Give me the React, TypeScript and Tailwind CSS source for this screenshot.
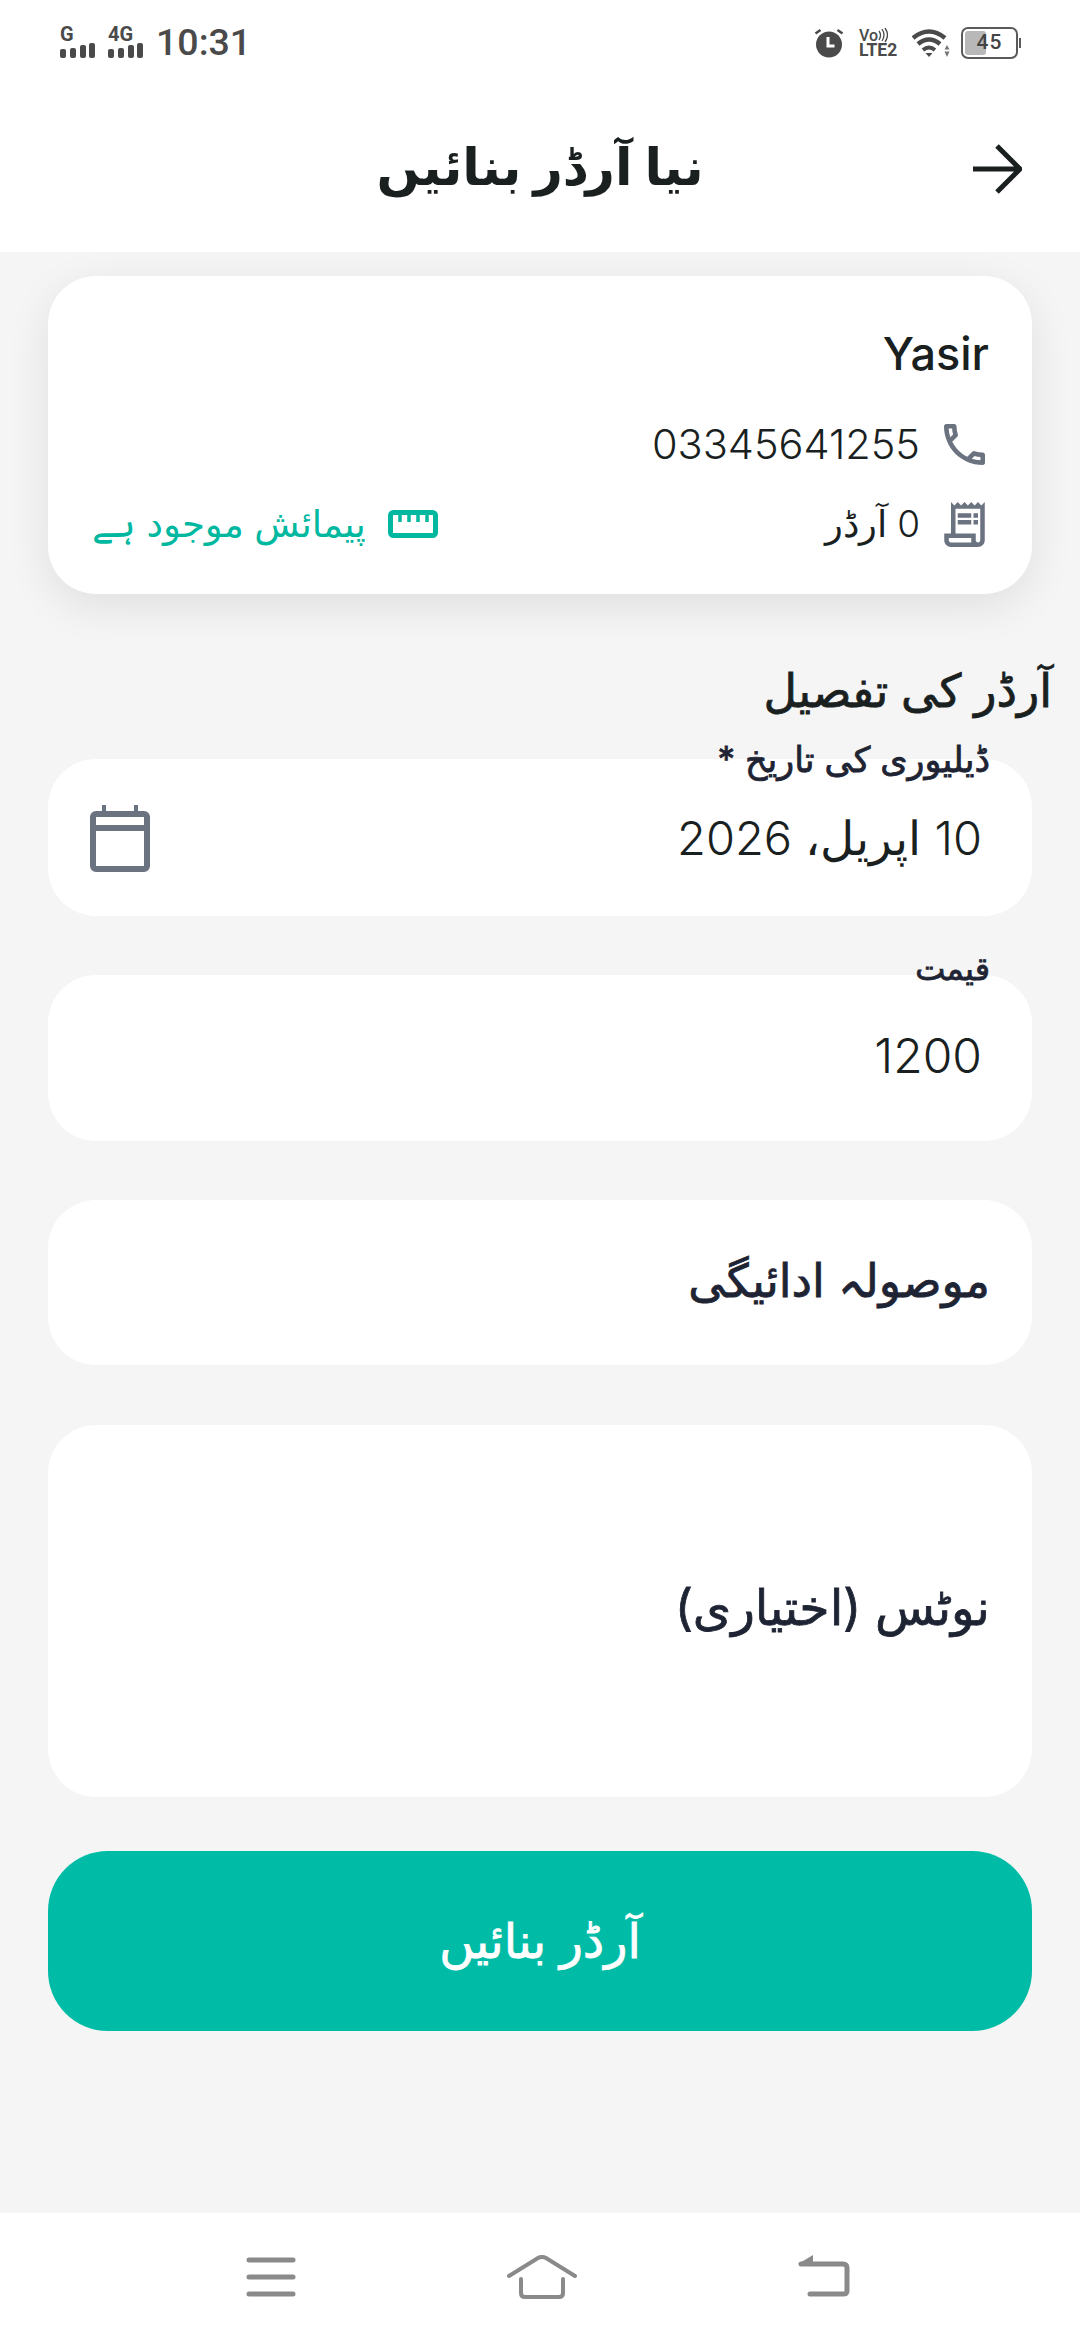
const base = "font-['Inter','DejaVu_Sans',sans-serif]";
const semi = "[-webkit-text-stroke:0.8px_currentColor]";
const roboto = "font-['Roboto',sans-serif]";

function Bars({ label }: { label: string }) {
  return (
    <div className="w-[36px] flex flex-col">
      <span className={`h-[16px] text-[20px] leading-[15px] font-bold text-[#4a4a4a] ${roboto}`}>{label}</span>
      <svg width="36" height="15" viewBox="0 0 36 15" fill="#4a4a4a">
        <rect x="0" y="6" width="6" height="9" rx="2" />
        <rect x="10" y="5" width="6" height="10" rx="2" />
        <rect x="20" y="2" width="6" height="13" rx="2" />
        <rect x="29" y="0" width="6" height="15" rx="2" />
      </svg>
    </div>
  );
}

function StatusBar() {
  return (
    <div dir="ltr" className="h-[60px] pt-[27px] pl-[60px] pr-[59px] flex items-start justify-between">
      <div className="flex items-start gap-[12px] text-[#4a4a4a]">
        <Bars label="G" />
        <Bars label="4G" />
        <span className={`text-[37.500px] leading-[31px] font-medium ${roboto}`}>10:31</span>
      </div>
      <div className="flex items-center gap-[15px]">
        <svg width="30" height="30" viewBox="0 0 30 30">
          <circle cx="15" cy="16.500" r="13" fill="#4a4a4a" />
          <path d="M14 9v9h6.500" stroke="#fff" strokeWidth="3" fill="none" />
          <path d="M1.500 5.500l5-3.500M28.500 5.500l-5-3.500" stroke="#4a4a4a" strokeWidth="2.500" />
        </svg>
        <div className="w-[38px] flex flex-col text-[#4a4a4a]">
          <div className="flex items-center h-[15px]">
            <span className={`text-[16px] leading-[15px] font-medium ${roboto}`}>Vo</span>
            <svg width="10" height="15" viewBox="0 0 10 15" fill="none" stroke="#4a4a4a" strokeWidth="1.300">
              <path d="M1 3q3 4 0 9M4 1q4 6 0 12M7 0q5 7 0 14" />
            </svg>
          </div>
          <span className={`text-[17.500px] leading-[15px] font-bold ${roboto}`}>LTE2</span>
        </div>
        <svg width="38" height="30" viewBox="0 0 38 30" fill="none" stroke="#4a4a4a">
          <path d="M1 10Q17-3 33 10" strokeWidth="4.500" />
          <path d="M6 16Q17 7 28 16" strokeWidth="4.500" />
          <path d="M11 22Q17 17 23 22" strokeWidth="4" />
          <path d="M13.500 25h7l-3.500 4z" fill="#4a4a4a" stroke="none" />
          <path d="M35 17l2.500 4.500h-5zM35 29l2.500-5.500h-5z" fill="#777" stroke="none" />
        </svg>
        <div className="flex items-center ml-[-4px]">
          <div className="relative w-[57px] h-[32px] border-2 border-[#5a5a5a] rounded-[7px] overflow-hidden p-[2px]">
            <div className="h-full w-[21px] rounded-[3px] bg-[#b8b8b8]" />
            <span className={`absolute inset-0 flex items-center justify-center text-[21px] tracking-[1px] font-medium text-[#444] ${roboto}`}>45</span>
          </div>
          <div className="w-[2px] h-[10px] bg-[#5a5a5a] ml-[1px]" />
        </div>
      </div>
    </div>
  );
}

function Field({ className, children }: { className: string; children: React.ReactNode }) {
  return <div className={`relative bg-white rounded-[48px] ${className}`}>{children}</div>;
}

export default function App() {
  return (
    <div dir="rtl" className={`w-[1080px] h-[2340px] bg-[#f5f5f5] flex flex-col overflow-hidden ${base}`}>
      <header className="bg-white h-[252px] shrink-0">
        <StatusBar />
        <div className="h-[192px] relative flex items-center justify-center pt-[20px]">
          <h1 className="text-[51px] font-bold text-[#1a1f1f] leading-none">نیا آرڈر بنائیں</h1>
          <svg className="absolute right-[58px] top-[84px]" width="50" height="50" viewBox="0 0 50 50" fill="none" stroke="#1a1f1f" strokeWidth="5">
            <path d="M1 25h46M25 2l23 23-23 23" />
          </svg>
        </div>
      </header>

      <main className="flex-1 px-[48px] pt-[24px] flex flex-col">
        <section className="h-[318px] bg-white rounded-[48px] shadow-[0_12px_44px_rgba(0,0,0,0.09)] pr-[44px] pl-[44px] pt-[46px]">
          <div dir="ltr" className="text-right text-[45px] leading-[64px] font-medium text-[#1a1f1f] mr-[-1px]">Yasir</div>
          <div className="flex items-center gap-[24px] mt-[33px] h-[50px] mr-[3px]">
            <svg width="41" height="41" viewBox="3 3 18 18" fill="#6b7280">
              <path d="M6.54 5c.06.89.21 1.76.45 2.59l-1.2 1.2c-.41-1.2-.67-2.47-.76-3.79h1.51m9.86 12.02c.85.24 1.72.39 2.6.45v1.49c-1.32-.09-2.59-.35-3.8-.75l1.2-1.19M7.5 3H4c-.55 0-1 .45-1 1 0 9.39 7.61 17 17 17 .55 0 1-.45 1-1v-3.490c0-.55-.45-1-1-1-1.240 0-2.450-.2-3.570-.57-.1-.04-.21-.05-.31-.05-.26 0-.51.1-.71.29l-2.200 2.200c-2.830-1.450-5.150-3.760-6.590-6.590l2.200-2.200c.28-.28.36-.67.25-1.020C8.700 6.450 8.500 5.250 8.500 4c0-.55-.45-1-1-1z" />
            </svg>
            <span dir="ltr" className="text-[41.500px] text-[#1a1f1f] font-light">03345641255</span>
          </div>
          <div className="flex items-center mt-[30px] h-[50px] justify-between mr-[3px]">
            <div className="flex items-center gap-[24px]">
              <svg width="41" height="45" viewBox="3 2 18 20" fill="#6b7280">
                <path d="M19.500 3.500L18 2l-1.500 1.500L15 2l-1.500 1.500L12 2l-1.500 1.500L9 2 7.500 3.500 6 2v14H3v3c0 1.660 1.340 3 3 3h12c1.660 0 3-1.340 3-3V2l-1.500 1.500zM15 20H6c-.55 0-1-.45-1-1v-1h10v2zm4-1c0 .55-.45 1-1 1s-1-.45-1-1v-3H8V5h11v14z" />
                <path d="M9 7h6v2H9zM16 7h2v2h-2zM9 10h6v2H9zM16 10h2v2h-2z" />
              </svg>
              <span className="text-[37px] text-[#1a1f1f] font-light">0 آرڈر</span>
            </div>
            <div className="flex items-center gap-[22px] text-[#00b8a0] text-[37px]">
              <svg width="50" height="28" viewBox="0 0 50 28">
                <rect x="2.500" y="2.500" width="45" height="23" rx="3" fill="none" stroke="#00b8a0" strokeWidth="5" />
                <path d="M12 3v9M21 3v9M30 3v9M39 3v9" stroke="#00b8a0" strokeWidth="3.500" />
              </svg>
              <span>پیمائش موجود ہے</span>
            </div>
          </div>
        </section>

        <h2 className={`mt-[68px] mr-[-20px] text-[46px] leading-[56px] text-[#1a1f1f] ${semi}`}>آرڈر کی تفصیل</h2>

        <Field className="h-[157px] mt-[41px] mb-[59px]">
          <label className={`absolute right-[42px] top-[-20px] text-[35px] leading-[40px] text-[#1e2433] ${semi}`}>ڈیلیوری کی تاریخ *</label>
          <div className="h-full flex items-center justify-between pr-[50px] pl-[42px] pt-[2px]">
            <span className="text-[47px] text-[#1a1f1f] font-light">10 اپریل، 2026</span>
            <svg width="60" height="67" viewBox="0 0 60 67" fill="none" stroke="#6b7280" strokeWidth="6">
              <rect x="3" y="9" width="54" height="55" rx="3" />
              <path d="M2 23h56" />
              <path d="M14 0v9M46 0v9" strokeWidth="4" />
            </svg>
          </div>
        </Field>

        <Field className="h-[166px] mb-[59px]">
          <label className={`absolute right-[42px] top-[-26px] text-[32px] leading-[40px] text-[#1e2433] ${semi}`}>قیمت</label>
          <div dir="ltr" className="h-full flex items-center justify-end pr-[50px] pb-[4px] text-[48px] text-[#1a1f1f] font-light">1200</div>
        </Field>

        <Field className="h-[165px] mb-[60px]">
          <div className={`h-full flex items-center pr-[42px] pb-[4px] text-[46px] text-[#1e2433] ${semi}`}>موصولہ ادائیگی</div>
        </Field>

        <Field className="h-[372px] mb-[54px]">
          <div className={`h-full flex items-center pr-[42px] pb-[6px] text-[49px] text-[#1e2433] ${semi}`}>نوٹس (اختیاری)</div>
        </Field>

        <button className={`h-[180px] rounded-[60px] bg-[#00bca6] text-white text-[48px] flex items-center justify-center ${semi}`}>آرڈر بنائیں</button>
      </main>

      <nav dir="ltr" className="bg-white h-[127px] shrink-0 flex items-start justify-between pl-[246px] pr-[230px] pt-[42px]">
        <svg width="50" height="40" viewBox="0 0 50 40" stroke="#8a8a8a" strokeWidth="5" strokeLinecap="round" className="mt-[2px]">
          <path d="M3 3h44M3 20h44M3 37h44" />
        </svg>
        <svg width="70" height="44" viewBox="0 0 70 44" fill="none" stroke="#8a8a8a" strokeWidth="4" strokeLinecap="round" strokeLinejoin="round" className="mr-[10px]">
          <path d="M2 21L31 3q4-2 8 0l29 18" />
          <path d="M14 24v14q0 4 4 4h34q4 0 4-4V24" />
        </svg>
        <svg width="52" height="44" viewBox="0 0 52 44" fill="none" stroke="#8a8a8a" strokeWidth="5" strokeLinecap="round">
          <path d="M3 9h42q4 0 4 4v23q0 3-4 3H12" />
          <path d="M0 9L15 0v9z" fill="#8a8a8a" stroke="none" />
        </svg>
      </nav>
    </div>
  );
}
